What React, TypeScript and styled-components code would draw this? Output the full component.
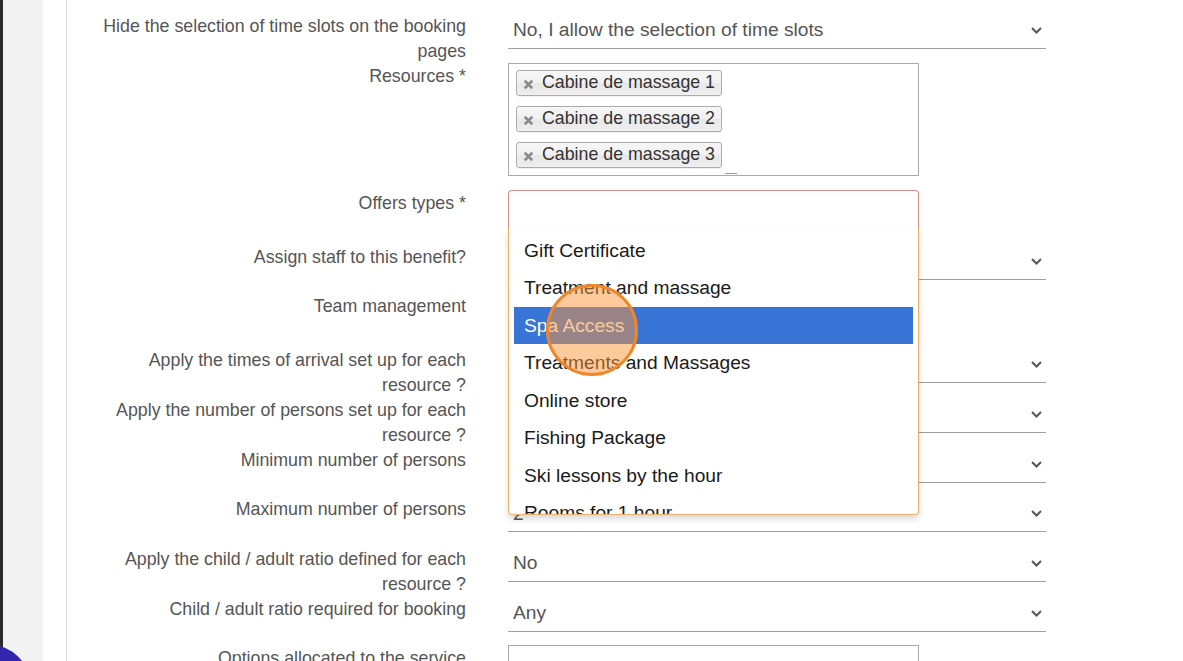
import React from 'react'
import styled, { createGlobalStyle } from 'styled-components'

const GlobalStyle = createGlobalStyle`
  html, body {
    margin: 0;
    padding: 0;
    background: #ffffff;
    overflow: hidden;
  }
  body {
    font-family: "Liberation Sans", Arial, sans-serif;
  }
`

const resources = ['Cabine de massage 1', 'Cabine de massage 2', 'Cabine de massage 3']

const offerTypes = [
  'Gift Certificate',
  'Treatment and massage',
  'Spa Access',
  'Treatments and Massages',
  'Online store',
  'Fishing Package',
  'Ski lessons by the hour',
  'Rooms for 1 hour',
]

function Chevron() {
  return (
    <svg width="11" height="7" viewBox="0 0 11 7">
      <polyline points="1,1 5.5,5.5 10,1" fill="none" stroke="#555" strokeWidth="2" />
    </svg>
  )
}

function CloseMark() {
  return (
    <svg width="9" height="9" viewBox="0 0 9 9">
      <path d="M1.5 1.5 L7.5 7.5 M7.5 1.5 L1.5 7.5" stroke="#8a8a8a" strokeWidth="2.6" strokeLinecap="round" />
    </svg>
  )
}

function SelectField({ value }: { value: string }) {
  return (
    <Select>
      <span>{value}</span>
      <Chevron />
    </Select>
  )
}

export default function App() {
  return (
    <Shell>
      <GlobalStyle />
      <SideRail />
      <Gutter />
      <Main>
        <Row>
          <Label>Hide the selection of time slots on the booking pages</Label>
          <Control>
            <SelectField value="No, I allow the selection of time slots" />
          </Control>
        </Row>

        <Row>
          <Label>Resources *</Label>
          <Control>
            <MultiBox>
              {resources.map((name, i) => (
                <TagRow key={name}>
                  <Tag>
                    <TagClose>
                      <CloseMark />
                    </TagClose>
                    {name}
                  </Tag>
                  {i === resources.length - 1 && <SearchStub />}
                </TagRow>
              ))}
            </MultiBox>
          </Control>
        </Row>

        <Row>
          <Label>Offers types *</Label>
          <Control $gap={15}>
            <OffersBox>
              <Dropdown>
                {offerTypes.map((t) => (
                  <Option key={t} $active={t === 'Spa Access'}>
                    {t}
                  </Option>
                ))}
              </Dropdown>
            </OffersBox>
          </Control>
        </Row>

        <Row>
          <Label>Assign staff to this benefit?</Label>
          <Control>
            <SelectField value="No" />
          </Control>
        </Row>

        <Row>
          <Label>Team management</Label>
          <Control>
            <PlainBox $height={40} />
          </Control>
        </Row>

        <Row>
          <Label>Apply the times of arrival set up for each resource ?</Label>
          <Control>
            <SelectField value="Yes" />
          </Control>
        </Row>

        <Row>
          <Label>Apply the number of persons set up for each resource ?</Label>
          <Control>
            <SelectField value="No" />
          </Control>
        </Row>

        <Row>
          <Label>Minimum number of persons</Label>
          <Control>
            <SelectField value="1" />
          </Control>
        </Row>

        <Row>
          <Label>Maximum number of persons</Label>
          <Control>
            <SelectField value="2" />
          </Control>
        </Row>

        <Row>
          <Label>Apply the child / adult ratio defined for each resource ?</Label>
          <Control>
            <SelectField value="No" />
          </Control>
        </Row>

        <Row>
          <Label>Child / adult ratio required for booking</Label>
          <Control>
            <SelectField value="Any" />
          </Control>
        </Row>

        <Row>
          <Label>Options allocated to the service</Label>
          <Control>
            <PlainBox $height={41} />
          </Control>
        </Row>
      </Main>

      <ClickRing />
      <ChatBubble />
    </Shell>
  )
}

const Shell = styled.div`
  position: relative;
  display: flex;
  height: 661px;
  overflow: hidden;
`

const SideRail = styled.div`
  flex: 0 0 43px;
  box-sizing: border-box;
  background: #f2f2f2;
  border-left: 3px solid #2a2a2a;
`

const Gutter = styled.div`
  flex: 0 0 23px;
  background: #ffffff;
`

const Main = styled.main`
  flex: 1;
  border-left: 1px solid #dddddd;
  padding: 12.5px 0 0 21px;
`

const Row = styled.div`
  display: grid;
  grid-template-columns: 378px 538px;
  column-gap: 42px;
  align-items: start;
`

const Label = styled.label`
  padding-top: 1px;
  margin-bottom: -1px;
  font-size: 17.8px;
  line-height: 25px;
  color: #555555;
  text-align: right;
`

const Control = styled.div<{ $gap?: number }>`
  margin-bottom: ${(p) => p.$gap ?? 13.5}px;
`

const Select = styled.div`
  box-sizing: border-box;
  height: 36px;
  display: flex;
  align-items: center;
  justify-content: space-between;
  padding: 0 4px 0 5px;
  border-bottom: 1px solid #9e9e9e;
  font-size: 19.2px;
  color: #555555;
`

const MultiBox = styled.div`
  box-sizing: border-box;
  width: 411px;
  height: 113.5px;
  border: 1px solid #aaaaaa;
  padding: 6px 7px;
  display: flex;
  flex-direction: column;
  gap: 10px;
`

const TagRow = styled.div`
  display: flex;
  align-items: flex-end;
`

const Tag = styled.span`
  box-sizing: border-box;
  height: 26px;
  display: inline-flex;
  align-items: center;
  padding: 0 6px 0 7px;
  border: 1px solid #aaaaaa;
  border-radius: 3px;
  background: linear-gradient(#f4f4f4 20%, #f0f0f0 50%, #e8e8e8 52%, #eeeeee);
  box-shadow: 0 0 2px #ffffff inset, 0 1px 0 rgba(0, 0, 0, 0.05);
  font-size: 17.8px;
  color: #333333;
  white-space: nowrap;
`

const TagClose = styled.span`
  display: inline-flex;
  margin: 4px 9px 0 0;
`

const SearchStub = styled.span`
  width: 12px;
  height: 1px;
  margin: 0 0 -6px 3px;
  background: #999999;
`

const OffersBox = styled.div`
  position: relative;
  box-sizing: border-box;
  width: 411px;
  height: 39px;
  border: 1px solid #d58f88;
  border-bottom-color: #c9a27a;
  border-radius: 4px 4px 0 0;
  background: #ffffff;
`

const Dropdown = styled.div`
  position: absolute;
  z-index: 5;
  top: 100%;
  left: -1px;
  right: -1px;
  box-sizing: border-box;
  height: 287px;
  padding: 4px 5px 0;
  background: #ffffff;
  border: 1px solid #eab06e;
  border-top: none;
  border-radius: 0 0 4px 4px;
  box-shadow: 0 4px 6px rgba(0, 0, 0, 0.15);
  overflow: hidden;
`

const Option = styled.div<{ $active?: boolean }>`
  height: 37.5px;
  line-height: 37.5px;
  padding-left: 10px;
  font-size: 19.2px;
  white-space: nowrap;
  color: ${(p) => (p.$active ? '#ffffff' : '#1a1a1a')};
  background: ${(p) => (p.$active ? '#3875d7' : 'transparent')};
`

const PlainBox = styled.div<{ $height: number }>`
  box-sizing: border-box;
  width: 411px;
  height: ${(p) => p.$height}px;
  border: 1px solid #aaaaaa;
`

const ClickRing = styled.div`
  position: absolute;
  z-index: 10;
  left: 546px;
  top: 284px;
  width: 92px;
  height: 92px;
  box-sizing: border-box;
  border-radius: 50%;
  border: 3px solid #f0862a;
  background: rgba(250, 150, 55, 0.5);
`

const ChatBubble = styled.div`
  position: absolute;
  z-index: 10;
  left: -50px;
  top: 645px;
  width: 80px;
  height: 80px;
  border-radius: 50%;
  background: #3326ad;
`
